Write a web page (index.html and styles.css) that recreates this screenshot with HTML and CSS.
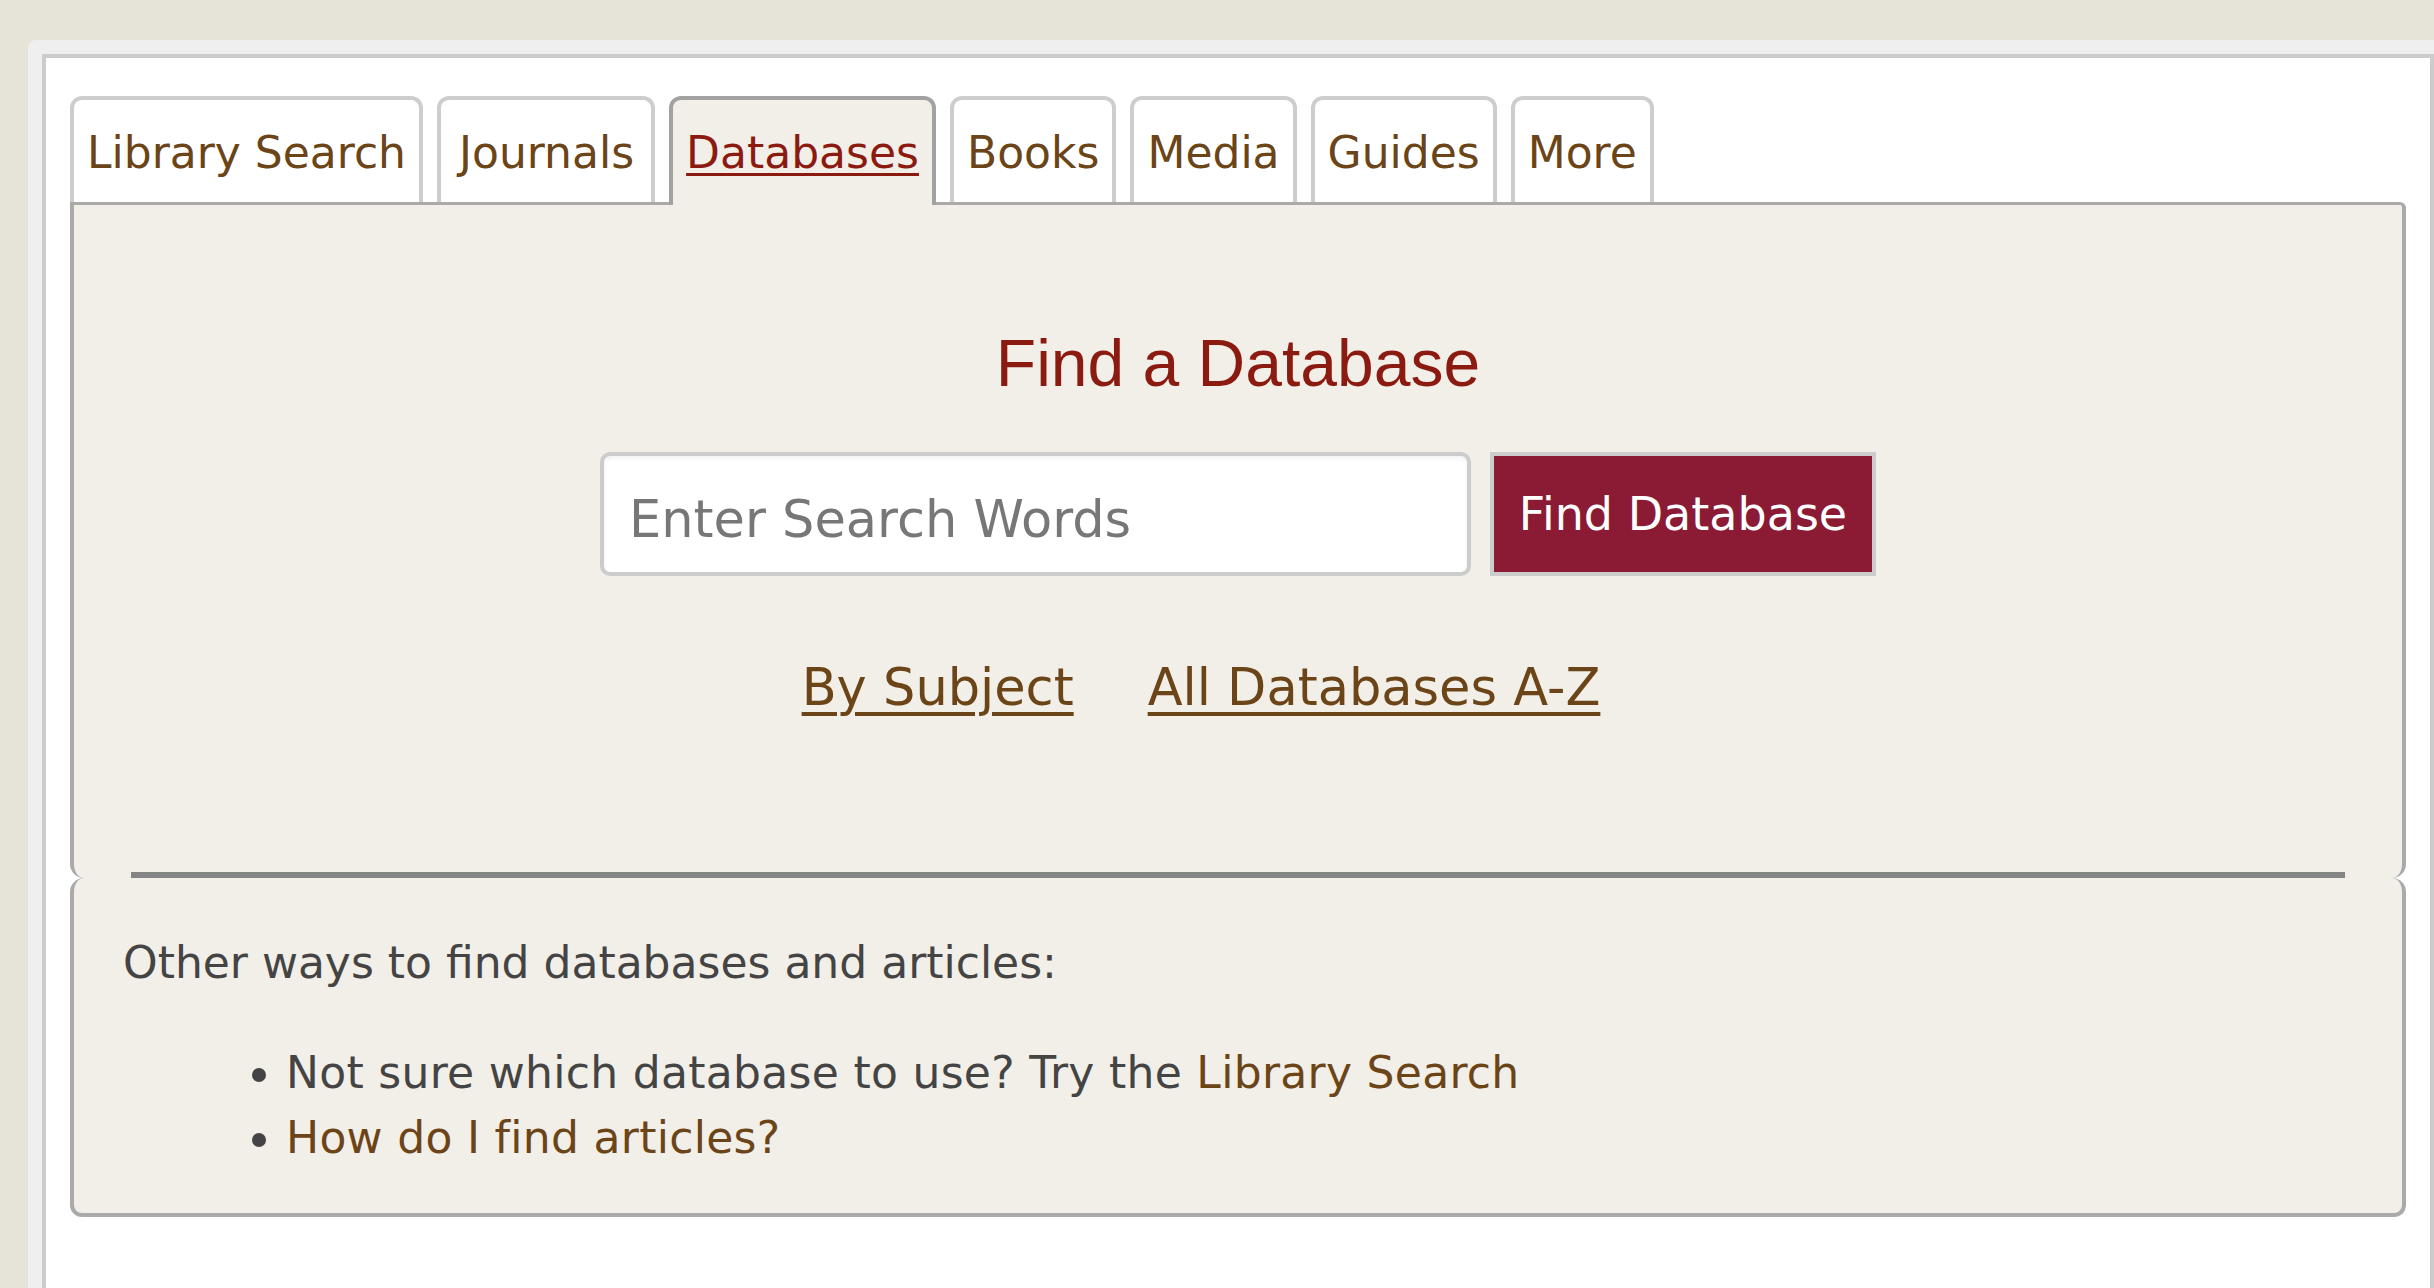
FILE: index.html
```html
<!DOCTYPE html>
<html lang="en">
<head>
<meta charset="utf-8">
<title>Find a Database</title>
<link rel="stylesheet" href="styles.css">
</head>
<body>
<div class="frame">
  <div class="panel">
    <ul class="tabs">
      <li class="tab"><a href="#">Library Search</a></li>
      <li class="tab tab-wide"><a href="#">Journals</a></li>
      <li class="tab active"><a href="#">Databases</a></li>
      <li class="tab"><a href="#">Books</a></li>
      <li class="tab"><a href="#">Media</a></li>
      <li class="tab"><a href="#">Guides</a></li>
      <li class="tab"><a href="#">More</a></li>
    </ul>
    <div class="box box-top">
      <h2 class="title">Find a Database</h2>
      <form class="search" onsubmit="return false;">
        <input class="search-input" type="text" placeholder="Enter Search Words">
        <button class="search-btn" type="submit">Find Database</button>
      </form>
      <div class="links">
        <a href="#">By Subject</a>
        <a href="#">All Databases A-Z</a>
      </div>
      <hr class="rule">
    </div>
    <div class="box box-bottom">
      <p class="intro">Other ways to find databases and articles:</p>
      <ul class="more-list">
        <li>Not sure which database to use? Try the <a href="#">Library Search</a></li>
        <li><a href="#">How do I find articles?</a></li>
      </ul>
    </div>
  </div>
</div>
</body>
</html>
```
FILE: styles.css
```css
html, body {
  margin: 0;
  height: 100%;
  overflow: hidden;
}

body {
  background: #e6e3d8;
  font-family: "DejaVu Sans", Verdana, sans-serif;
}

.frame {
  box-sizing: border-box;
  margin: 40px 0 0 28px;
  padding: 14px 0 0 14px;
  background: #efefef;
  border-top-left-radius: 8px;
  width: 2406px;
  height: 1248px;
}

.panel {
  width: 2392px;
  height: 100%;
  box-sizing: border-box;
  border: 4px solid #cccccc;
  border-bottom: 0;
  background: #ffffff;
  padding: 38px 24px 0;
}

.tabs {
  display: flex;
  align-items: flex-start;
  gap: 14px;
  list-style: none;
  margin: 0;
  padding: 0;
  position: relative;
  z-index: 1;
}

.tab {
  border: 4px solid #cdcdcd;
  border-bottom: 0;
  border-radius: 12px 12px 0 0;
  background: #ffffff;
  padding: 27px 13px 24px;
  font-size: 44px;
  line-height: 51px;
}

.tab-wide {
  padding-left: 18px;
  padding-right: 17px;
}

.tab a {
  color: #6b4418;
  text-decoration: none;
}

.tab.active {
  background: #f2efe8;
  border-color: #a2a2a2;
  padding-bottom: 27px;
  margin-bottom: -3px;
}

.tab.active a {
  color: #8b1a10;
  text-decoration: underline;
  text-decoration-thickness: 3px;
  text-underline-offset: 5px;
}

.box {
  background: #f2efe8;
  border: 4px solid #aaaaaa;
}

.box-top {
  border-top-width: 3px;
  border-bottom: 0;
  border-radius: 0 6px 14px 14px;
  padding: 120px 0 0;
  text-align: center;
}

.title {
  margin: 0;
  font-family: "Liberation Sans", Arial, sans-serif;
  font-weight: 400;
  font-size: 66px;
  line-height: 76px;
  color: #8b1a10;
}

.search {
  display: flex;
  justify-content: center;
  gap: 19px;
  margin: 51px 0 0;
}

.search-input {
  width: 871px;
  height: 124px;
  box-sizing: border-box;
  margin: 0;
  border: 4px solid #cccccc;
  border-radius: 10px;
  padding: 10px 25px 0;
  font-family: "DejaVu Sans", Verdana, sans-serif;
  font-size: 51px;
  color: #333333;
  background: #ffffff;
  box-shadow: inset 0 3px 4px rgba(0, 0, 0, 0.05);
  outline: none;
}

.search-input::placeholder {
  color: #777777;
  opacity: 1;
}

.search-btn {
  width: 386px;
  height: 124px;
  box-sizing: border-box;
  margin: 0;
  border: 4px solid #cccccc;
  background: #8b1a35;
  color: #ffffff;
  font-family: "DejaVu Sans", Verdana, sans-serif;
  font-size: 46px;
  padding: 0 10px;
}

.links {
  display: flex;
  justify-content: center;
  margin-top: 82px;
  font-size: 51px;
}

.links a {
  margin-right: 74px;
  color: #6b4418;
  text-decoration: underline;
  text-decoration-thickness: 4px;
  text-underline-offset: 7px;
}

.rule {
  margin: 155px 57px 0;
  border: 0;
  height: 6px;
  background: #848484;
}

.box-bottom {
  border-top: 0;
  border-radius: 14px 14px 12px 12px;
  padding: 52px 49px 43px;
  color: #444444;
  font-size: 44px;
  line-height: 65px;
}

.intro {
  margin: 0;
}

.more-list {
  margin: 45px 0 0;
  padding-left: 163px;
}

.more-list li {
  letter-spacing: 0.3px;
}

.more-list li::marker {
  letter-spacing: 0;
}

.more-list a {
  color: #6b4418;
  text-decoration: none;
}
```
